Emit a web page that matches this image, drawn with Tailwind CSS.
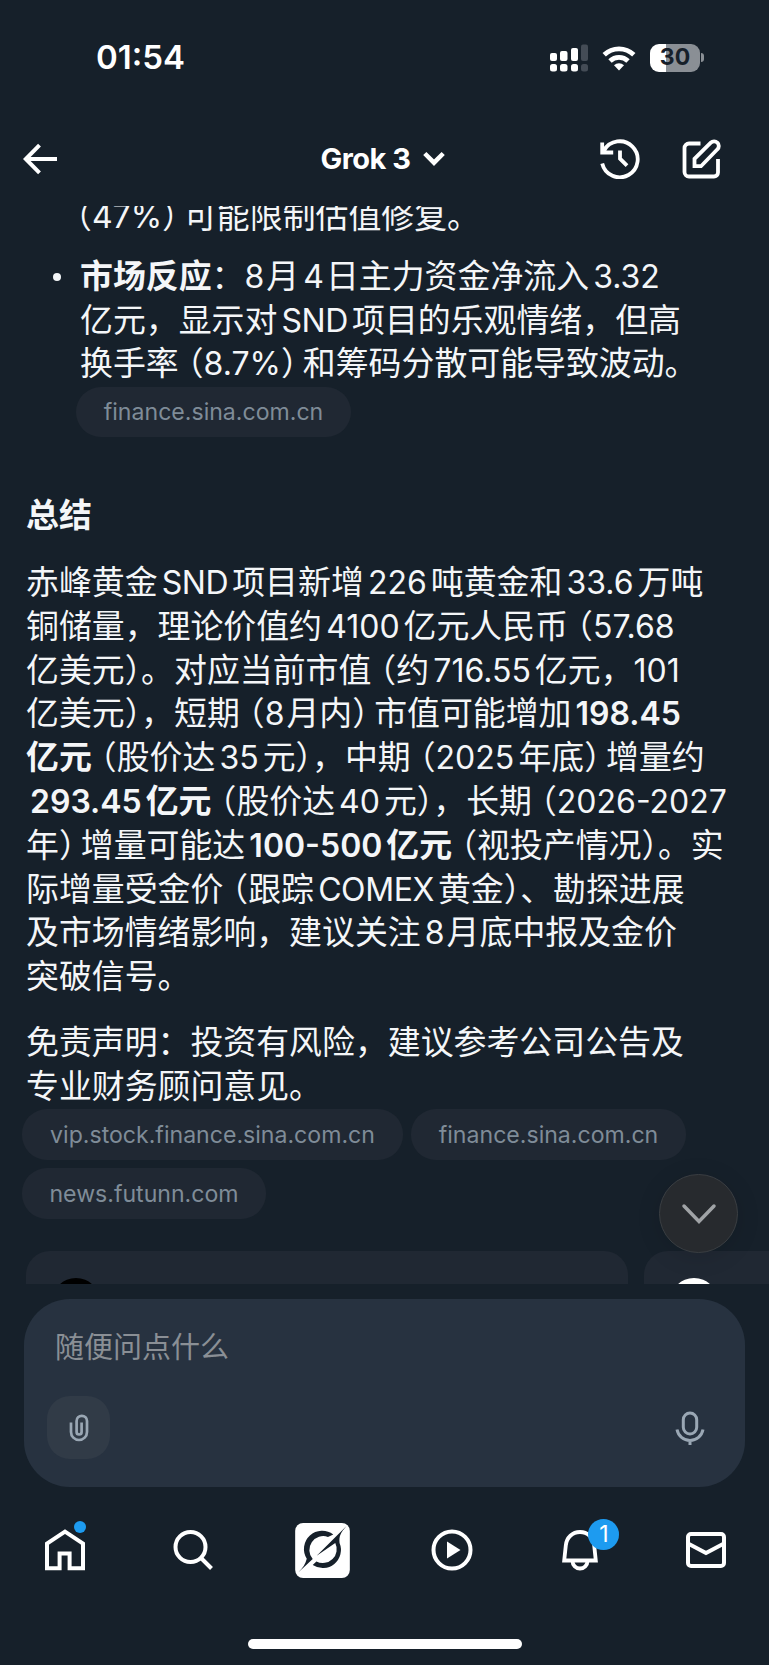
<!DOCTYPE html>
<html lang="zh-CN">
<head>
    <meta charset="UTF-8">
    <meta name="viewport" content="width=device-width, initial-scale=1.0">
    <title>Grok 3</title>
    <script src="https://cdn.jsdelivr.net/npm/@tailwindcss/browser@4"></script>
</head>
<body class="bg-[#16202a] text-[#f4f6f8] font-['Inter','Noto_Sans_CJK_SC',sans-serif]">
<div class="w-[769px] h-[1665px] flex flex-col overflow-hidden">

    <!-- Status bar + header -->
    <header class="h-[206px] shrink-0 flex flex-col text-white">
        <div class="h-[115px] flex items-center justify-between pl-[96px] pr-[65px]">
            <span class="text-[33px] leading-none font-semibold">01:54</span>
            <div class="flex items-center gap-[14px]">
                <svg class="w-[39px] h-[28px]" viewBox="0 0 39 28" fill="#fff">
                    <rect x="1" y="9" width="7" height="8" rx="2"/><rect x="11" y="7" width="7.5" height="10" rx="2"/><rect x="22" y="4" width="7" height="13" rx="2"/>
                    <rect x="1" y="20" width="7" height="7.500" rx="2.500"/><rect x="11" y="20" width="7.500" height="7.500" rx="2.500"/><rect x="22" y="20" width="7" height="7.500" rx="2.500"/>
                    <g fill="#444c56"><rect x="32" y="0.500" width="7" height="16.500" rx="2"/><rect x="32" y="20" width="7" height="7.500" rx="2.500"/></g>
                </svg>
                <svg class="w-[34px] h-[26px]" viewBox="0 0 34 26" fill="none" stroke="#fff" stroke-width="4.800">
                    <path d="M2.200 9.800a21.300 21.300 0 0 1 29.600 0M8 16a12.800 12.800 0 0 1 18 0"/>
                    <path d="M17 25.500l-5-5.200a7.300 7.300 0 0 1 10 0z" fill="#fff" stroke="none"/>
                </svg>
                <div class="flex items-center gap-[1px]">
                    <div class="w-[50px] h-[28px] rounded-[9px] bg-linear-to-r from-white from-[32%] to-[#8a8f95] to-[32%] flex items-center justify-center text-[#16202a] text-[23px] leading-none font-bold">30</div>
                    <div class="w-[3px] h-[9px] rounded-r-full bg-[#8a8f95]"></div>
                </div>
            </div>
        </div>
        <div class="h-[87px] flex items-center justify-between pl-[23px] pr-[48px]">
            <svg class="w-[115px] h-[34px]" viewBox="0 0 115 34" fill="none" stroke="#fff" stroke-width="4">
                <path d="M34 17H3M16.500 3.200L2.800 17l13.700 13.800"/>
            </svg>
            <div class="flex items-center gap-[12px] pl-[27px]">
                <span class="text-[29px] leading-none font-bold tracking-[-0.5px]">Grok 3</span>
                <svg class="w-[22px] h-[16px]" viewBox="0 0 22 16" fill="none" stroke="#fff" stroke-width="4.500"><path d="M1.800 2.500l9.200 9.200 9.200-9.200"/></svg>
            </div>
            <div class="flex items-center gap-[42px]">
                <svg class="w-[40px] h-[40px]" viewBox="0 0 40 40" fill="none" stroke="#fff" stroke-width="3.800">
                    <path d="M2.200 24.500A18 18 0 1 0 4 11.500M2.200 3.500v10h11"/>
                    <path d="M20 11.500v8.200l7 7"/>
                </svg>
                <svg class="w-[39px] h-[40px]" viewBox="0 0 39 40" fill="none" stroke="#fff" stroke-width="3.800">
                    <path d="M18.500 4.500H7a4.500 4.500 0 0 0-4.500 4.500v24A4.500 4.500 0 0 0 7 37.500h25a4 4 0 0 0 4-4V20"/>
                    <path d="M12.500 27.200v-7.400L28.800 3.700a4.600 4.600 0 0 1 6.600 0 4.600 4.600 0 0 1 0 6.600L19 27.200z"/>
                </svg>
            </div>
        </div>
    </header>

    <!-- Answer -->
    <main class="h-[1078px] shrink-0 overflow-hidden flex flex-col text-[32.9px] leading-[43.8px] whitespace-nowrap [text-autospace:normal]">
        <div class="answer -mt-[11px] pl-[67px]">（47%）可能限制估值修复。</div>
        <div class="mt-[16px] pl-[53px] flex">
            <span class="mt-[18px] mr-[19px] size-[8px] shrink-0 rounded-full bg-[#f4f6f8]"></span>
            <div class="answer">
                <div><b class="font-semibold">市场反应</b>：8月4日主力资金净流入3.32</div>
                <div>亿元，显示对SND项目的乐观情绪，但高</div>
                <div>换手率（8.7%）和筹码分散可能导致波动。</div>
            </div>
        </div>
        <div class="pl-[76px] mt-[1px] flex">
            <span class="w-[275px] h-[50px] rounded-[25px] bg-[#202833] text-[#7f8c98] text-[23.1px] leading-[51px] text-center">finance.sina.com.cn</span>
        </div>

        <h2 class="mt-[57px] pl-[26px] font-semibold">总结</h2>

        <div class="answer mt-[23px] pl-[26px]">
            <div>赤峰黄金SND项目新增226吨黄金和33.6万吨</div>
            <div>铜储量，理论价值约4100亿元人民币（57.68</div>
            <div>亿美元）。对应当前市值（约716.55亿元，101</div>
            <div>亿美元），短期（8月内）市值可能增加<b class="font-semibold">198.45</b></div>
            <div><b class="font-semibold">亿元</b>（股价达35元），中期（2025年底）增量约</div>
            <div class="pl-[4px]"><b class="font-semibold">293.45亿元</b>（股价达40元），长期（2026-2027</div>
            <div>年）增量可能达<b class="font-semibold">100-500亿元</b>（视投产情况）。实</div>
            <div>际增量受金价（跟踪COMEX黄金）、勘探进展</div>
            <div>及市场情绪影响，建议关注8月底中报及金价</div>
            <div>突破信号。</div>
        </div>
        <div class="mt-[22px] pl-[26px]">
            <div>免责声明：投资有风险，建议参考公司公告及</div>
            <div>专业财务顾问意见。</div>
        </div>

        <div class="pl-[22px] flex flex-wrap gap-2 text-[#7f8c98] text-[23.1px] leading-[52px] text-center">
            <span class="w-[381px] h-[51px] rounded-[25px] bg-[#202833]">vip.stock.finance.sina.com.cn</span>
            <span class="w-[275px] h-[51px] rounded-[25px] bg-[#202833]">finance.sina.com.cn</span>
            <span class="w-[244px] h-[51px] rounded-[25px] bg-[#202833]">news.futunn.com</span>
        </div>

        <div class="mt-[32px] pl-[26px] flex gap-[16px]">
            <div class="w-[602px] h-[180px] shrink-0 rounded-[24px] bg-[#202833] pl-[26px] pt-[27px]"><div class="size-[48px] rounded-full bg-black"></div></div>
            <div class="w-[602px] h-[180px] shrink-0 rounded-[24px] bg-[#202833] pl-[26px] pt-[27px]"><div class="size-[48px] rounded-full bg-white"></div></div>
        </div>
    </main>

    <!-- Scroll to bottom -->
    <button class="absolute left-[659px] top-[1174px] size-[79px] rounded-full bg-[#272a2e] border border-[#3a3e42] shadow-[0_4px_24px_rgba(0,0,0,0.12)] flex items-center justify-center">
        <svg class="w-[36px] h-[22px]" viewBox="0 0 36 22" fill="none" stroke="#a0a3a6" stroke-width="3.500" stroke-linecap="round"><path d="M3 3l15 15.500L33 3"/></svg>
    </button>

    <!-- Prompt box -->
    <div class="mt-[15px] ml-[24px] w-[721px] h-[188px] shrink-0 rounded-[46px] bg-[#273240] flex flex-col justify-between pl-[23px] pr-[40px] pt-[27px] pb-[28px]">
        <div class="pl-[8px] text-[29px] leading-[43px] text-[#8a8f95]">随便问点什么</div>
        <div class="flex items-center justify-between">
            <div class="size-[63px] rounded-[23px] bg-[#313b47] flex items-center justify-center">
                <svg class="w-[22px] h-[28px]" viewBox="0 0 22 28" fill="none" stroke="#9aa7b4" stroke-width="2.700">
                    <path d="M3 8.500V18a8 8 0 0 0 16 0V7a5.200 5.200 0 0 0-10.400 0v11a2.500 2.500 0 0 0 5 0V8.500"/>
                </svg>
            </div>
            <svg class="w-[30px] h-[34px]" viewBox="0 0 30 34" fill="none" stroke="#9aa7b4" stroke-width="3">
                <rect x="8.300" y="2" width="13.400" height="21" rx="6.700"/>
                <path d="M2 18.500a13.200 13.200 0 0 0 26 0M15 29v5"/>
            </svg>
        </div>
    </div>

    <!-- Tab bar -->
    <nav class="mt-[16px] h-[94px] shrink-0 flex items-center justify-between pl-[44px] pr-[42px]">
        <div class="relative size-[42px]">
            <svg class="size-[42px]" viewBox="0 0 42 42" fill="none" stroke="#fff" stroke-width="4"><path d="M3 14.500v24.700h12.600V24.500h10v14.700H39V14.500L21 2.700z"/></svg>
            <span class="absolute left-[30px] -top-[8px] size-[12px] rounded-full bg-[#1d9bf0]"></span>
        </div>
        <svg class="size-[42px] ml-[2px] -mr-[2px]" viewBox="0 0 42 42" fill="none" stroke="#fff" stroke-width="4"><circle cx="18.500" cy="18" r="15"/><path d="M29 29l10.500 10.500"/></svg>
        <svg class="size-[55px]" viewBox="885 68 165 166">
            <rect x="885" y="68" width="165" height="166" rx="24" fill="#fff"/>
            <path fill="#16202a" d="M1000 103A55 55 0 0 0 920 176C916 193 908 203 895 217L938 177A42 42 0 0 1 984 110Z"/>
            <path fill="#16202a" d="M1040 77C1022 98 1017 107 1019 128A55 55 0 0 1 938 195L949 184A42 42 0 0 0 1006 128L950 167Z"/>
        </svg>
        <svg class="size-[42px] -ml-[3px] mr-[3px]" viewBox="0 0 42 42" fill="none" stroke="#fff" stroke-width="4"><circle cx="21" cy="21" r="18.500"/><path d="M16 12.500v17L29.500 21z" fill="#fff" stroke="none"/></svg>
        <div class="relative size-[42px]">
            <svg class="size-[42px]" viewBox="0 0 42 42" fill="none" stroke="#fff" stroke-width="3.800"><path d="M5.200 31.500L6.800 16.500C7.500 8.500 13.500 3 21 3s13.500 5.500 14.200 13.500l1.600 15z"/><path d="M13.500 32a7.500 7.500 0 0 0 15 0"/></svg>
            <span class="absolute left-[29px] -top-[10px] size-[31px] rounded-full bg-[#1d9bf0] text-white text-[23px] leading-[31px] text-center">1</span>
        </div>
        <svg class="size-[42px]" viewBox="0 0 42 42" fill="none" stroke="#fff" stroke-width="4"><rect x="3" y="5" width="36" height="32" rx="3"/><path d="M3 14.500L21 24l18-9.500"/></svg>
    </nav>

    <div class="mt-[42px] ml-[248px] w-[274px] h-[10px] shrink-0 rounded-full bg-white"></div>
</div>

<script>
    // Tighten Latin runs and full-width brackets inside the answer text
    function wrapRun(run) {
        let cls = 'text-[32px] leading-none';
        if (/[A-Z]/.test(run)) cls = 'text-[32px] leading-none tracking-[-0.4px]';
        if (run.length === 1) cls = 'text-[32px] leading-none tracking-[-2px]';
        return `<span class="${cls}">${run}</span>`;
    }

    document.querySelectorAll('.answer').forEach((el) => {
        const walker = document.createTreeWalker(el, NodeFilter.SHOW_TEXT);
        const nodes = [];
        while (walker.nextNode()) nodes.push(walker.currentNode);
        nodes.forEach((node) => {
            if (!node.textContent.trim()) return;
            const tpl = document.createElement('template');
            tpl.innerHTML = node.textContent.replace(/[A-Za-z0-9.%-]+|（|）(?![。，、])/g, (run) => {
                if (run === '（') return '<span class="-ml-[8px]">（</span>';
                if (run === '）') return '<span class="-mr-[11px]">）</span>';
                return wrapRun(run);
            });
            node.replaceWith(tpl.content);
        });
    });
</script>
</body>
</html>
